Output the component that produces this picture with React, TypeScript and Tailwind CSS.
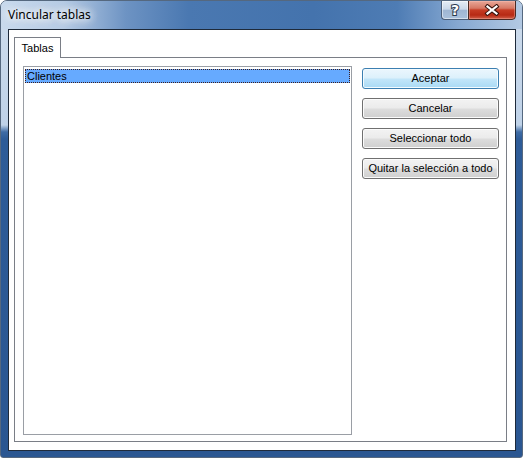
import React from 'react';

const ui = "font-['Liberation_Sans',Arial,sans-serif] text-[11px] text-black";

function DlgButton({ label, isDefault }: { label: string; isDefault?: boolean }) {
  return (
    <button
      className={`${ui} h-[21px] w-[137px] rounded-[3px] border flex items-center justify-center leading-none ${
        isDefault
          ? 'border-[#3c7fb1] bg-[linear-gradient(to_bottom,#ebf6fd_0%,#dcf0fb_48%,#c3e6f9_52%,#a9daf5_100%)] shadow-[inset_0_0_0_1px_#f3fbff]'
          : 'border-[#707070] bg-[linear-gradient(to_bottom,#f3f3f3_0%,#ebebeb_48%,#dddddd_52%,#cfcfcf_100%)] shadow-[inset_0_0_0_1px_#fbfbfb]'
      }`}
    >
      {label}
    </button>
  );
}

export default function App() {
  return (
    <div className="w-[523px] h-[458px] flex flex-col rounded-t-[7px] rounded-b-[3px] border border-[#55687f] overflow-hidden bg-[linear-gradient(to_bottom,#cfdded_0px,#bfd2e8_124px,#3f6ca5_131px,#2e5c98_138px,#2a5691_100%)]">
      {/* Title bar */}
      <div className="h-[28px] shrink-0 flex items-start justify-between pl-[7px] pr-[6px] bg-[linear-gradient(to_right,#c9daed_0%,#b6cbe4_12%,#6d93c3_24%,#4a78b1_36%,#4473ad_60%,#4e7cb4_76%,#87a9d2_88%,#b3c9e3_100%)]">
        <span className="mt-[6px] leading-[16px] text-[12px] text-black font-['Noto_Sans','Liberation_Sans',sans-serif] [text-shadow:0_0_8px_#ffffff,0_0_8px_#ffffff,0_0_12px_#ffffff]">
          Vincular tablas
        </span>
        <div className="flex -mt-px">
          <div className="w-[27px] h-[20px] rounded-bl-[4px] border border-[#4a5d78] border-r-0 bg-[linear-gradient(to_bottom,#e5edf6_0%,#cbd9ea_45%,#9fb6d3_52%,#aac1dc_100%)] shadow-[inset_0_0_0_1px_rgba(255,255,255,0.5)] flex items-center justify-center">
            <span className="font-['DejaVu_Sans',sans-serif] font-bold text-[14px] leading-none text-white [-webkit-text-stroke:2px_#2b3a4e] [paint-order:stroke_fill]">
              ?
            </span>
          </div>
          <div className="w-[48px] h-[20px] rounded-br-[4px] border border-[#4a2a24] bg-[linear-gradient(to_bottom,#e9a798_0%,#d67864_40%,#c63c24_50%,#b72a14_78%,#d0604a_100%)] shadow-[inset_0_0_0_1px_rgba(255,200,190,0.35)] flex items-center justify-center">
            <svg width="16" height="12" viewBox="0 0 16 12">
              <path d="M3.5 2.5 L12.5 9.5 M12.5 2.5 L3.5 9.5" stroke="#3a1610" strokeWidth="4.2" strokeLinecap="square" fill="none" />
              <path d="M3.5 2.5 L12.5 9.5 M12.5 2.5 L3.5 9.5" stroke="#ffffff" strokeWidth="2.2" strokeLinecap="square" fill="none" />
            </svg>
          </div>
        </div>
      </div>

      {/* Client area */}
      <div className="flex-1 flex pl-[7px] pr-[6px] pb-[6px]">
        <div className="flex-1 flex flex-col border border-[#1e2a3a] bg-white pl-[5px] pr-[8px] pt-[7px]">
          {/* Tab header */}
          <div className="flex">
            <div className={`${ui} relative z-10 -mb-px h-[21px] w-[47px] border border-b-0 border-[#7a7e86] bg-white flex items-center justify-center`}>
              Tablas
            </div>
          </div>
          {/* Tab panel */}
          <div className="h-[385px] border border-[#7a7e86] flex items-start pl-[8px] pt-[8px] gap-[10px]">
            <div className="w-[329px] h-[369px] border border-[#9a9ea5] px-px pt-[2px]">
              <div className={`${ui} h-[14px] bg-[#66aaff] border border-dotted border-[#3d1e1e] pl-[1px] leading-[12px]`}>
                Clientes
              </div>
            </div>
            <div className="flex flex-col gap-[9px] mt-[2px]">
              <DlgButton label="Aceptar" isDefault />
              <DlgButton label="Cancelar" />
              <DlgButton label="Seleccionar todo" />
              <DlgButton label="Quitar la selección a todo" />
            </div>
          </div>
        </div>
      </div>
    </div>
  );
}
